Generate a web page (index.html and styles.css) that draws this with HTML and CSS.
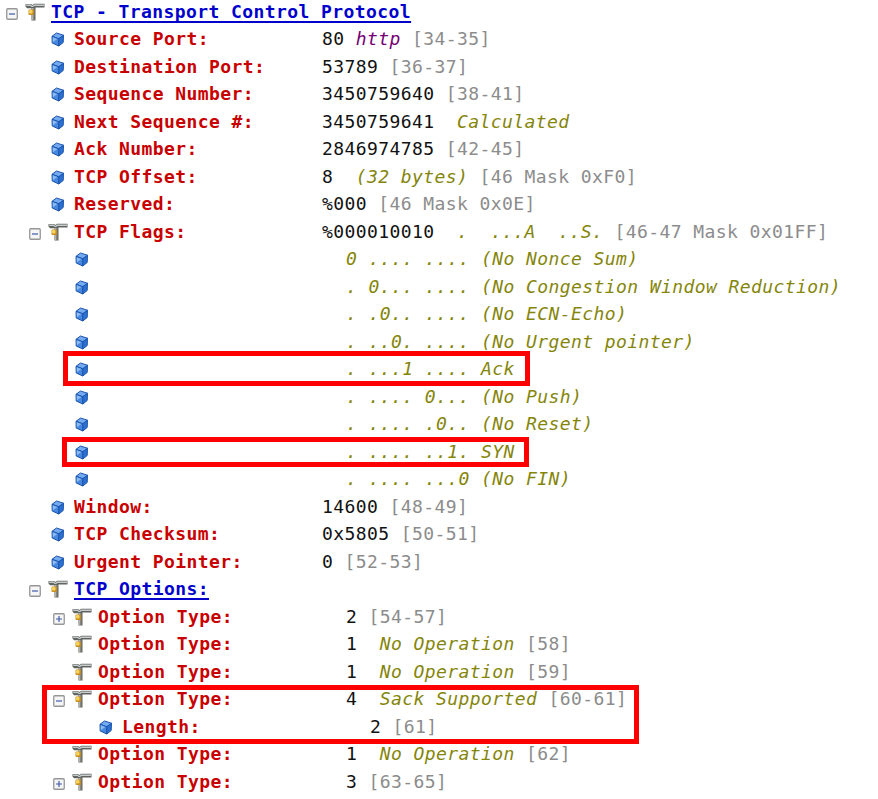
FILE: index.html
```html
<!DOCTYPE html>
<html lang="en">
<head>
<meta charset="utf-8">
<title>TCP - Transport Control Protocol</title>
<link rel="stylesheet" href="styles.css">
</head>
<body>
<svg class="defs" width="0" height="0" aria-hidden="true">
  <symbol id="tool" viewBox="0 0 20 18">
    <path d="M.5 1H6l1.500 1L9 .8h10.500v3.700H10.500V17.500H6.500V5.300H2L.5 3.500z" fill="#62655f"/>
    <path d="M1 1.400h4.800L7.300 3 9 1.400h10v1.500H9.200L8.300 4H6.500L5.500 3H1.300z" fill="#c3cbcf"/>
    <path d="M7 5h1.600v12H7z" fill="#b3b3aa"/>
    <path d="M8.600 5h1.200v12H8.600z" fill="#77776c"/>
    <rect x="3.500" y="6.500" width="5.300" height="5.500" rx="1" fill="#c98f1c"/>
    <rect x="4" y="7" width="3.500" height="3.600" rx="1" fill="#f7d25c"/>
  </symbol>
  <symbol id="cube" viewBox="0 0 14 15">
    <g stroke="#1a55ae" stroke-width="1" stroke-linejoin="round">
      <path d="M1 4.300 5.500 1l6.900 2.200-4.600 3.600z" fill="#74aaf0"/>
      <path d="M1 4.300 7.800 6.800V14L1.200 11z" fill="#4787e0"/>
      <path d="m7.800 6.800 4.700-3.500-.3 7.200L7.800 14z" fill="#2d70d0"/>
    </g>
    <path d="m1.700 5.200 4.600 1.700-4.400 3.300z" fill="#8cbcf4"/>
  </symbol>
  <symbol id="minus" viewBox="0 0 12 12">
    <rect x=".75" y=".75" width="10.500" height="10.500" rx="1" fill="#f6f6f6" stroke="#969696" stroke-width="1.300"/>
    <path d="M3 6h6" stroke="#3f5bab" stroke-width="1.200"/>
  </symbol>
  <symbol id="plus" viewBox="0 0 12 12">
    <rect x=".75" y=".75" width="10.500" height="10.500" rx="1" fill="#f6f6f6" stroke="#969696" stroke-width="1.300"/>
    <path d="M3 6h6M6 3v6" stroke="#3f5bab" stroke-width="1.200"/>
  </symbol>
</svg>
<main class="tree">
  <div class="row"><svg class="toggle"><use href="#minus"/></svg><svg class="tool"><use href="#tool"/></svg><span class="heading">TCP - Transport Control Protocol</span></div>
  <div class="row d1"><svg class="cube"><use href="#cube"/></svg><span class="label">Source Port:</span><span class="value">80 <i class="name">http</i> <s>[34-35]</s></span></div>
  <div class="row d1"><svg class="cube"><use href="#cube"/></svg><span class="label">Destination Port:</span><span class="value">53789 <s>[36-37]</s></span></div>
  <div class="row d1"><svg class="cube"><use href="#cube"/></svg><span class="label">Sequence Number:</span><span class="value">3450759640 <s>[38-41]</s></span></div>
  <div class="row d1"><svg class="cube"><use href="#cube"/></svg><span class="label">Next Sequence #:</span><span class="value">3450759641  <i>Calculated</i></span></div>
  <div class="row d1"><svg class="cube"><use href="#cube"/></svg><span class="label">Ack Number:</span><span class="value">2846974785 <s>[42-45]</s></span></div>
  <div class="row d1"><svg class="cube"><use href="#cube"/></svg><span class="label">TCP Offset:</span><span class="value">8  <i>(32 bytes)</i> <s>[46 Mask 0xF0]</s></span></div>
  <div class="row d1"><svg class="cube"><use href="#cube"/></svg><span class="label">Reserved:</span><span class="value">%000 <s>[46 Mask 0x0E]</s></span></div>
  <div class="row d1"><svg class="toggle"><use href="#minus"/></svg><svg class="tool"><use href="#tool"/></svg><span class="label">TCP Flags:</span><span class="value">%000010010  <i>.  ...A  ..S.</i> <s>[46-47 Mask 0x01FF]</s></span></div>
  <div class="row d2"><svg class="cube"><use href="#cube"/></svg><span class="label"></span><span class="value"><i>0 .... .... (No Nonce Sum)</i></span></div>
  <div class="row d2"><svg class="cube"><use href="#cube"/></svg><span class="label"></span><span class="value"><i>. 0... .... (No Congestion Window Reduction)</i></span></div>
  <div class="row d2"><svg class="cube"><use href="#cube"/></svg><span class="label"></span><span class="value"><i>. .0.. .... (No ECN-Echo)</i></span></div>
  <div class="row d2"><svg class="cube"><use href="#cube"/></svg><span class="label"></span><span class="value"><i>. ..0. .... (No Urgent pointer)</i></span></div>
  <div class="row d2"><svg class="cube"><use href="#cube"/></svg><span class="label"></span><span class="value"><i>. ...1 .... Ack</i></span></div>
  <div class="row d2"><svg class="cube"><use href="#cube"/></svg><span class="label"></span><span class="value"><i>. .... 0... (No Push)</i></span></div>
  <div class="row d2"><svg class="cube"><use href="#cube"/></svg><span class="label"></span><span class="value"><i>. .... .0.. (No Reset)</i></span></div>
  <div class="row d2"><svg class="cube"><use href="#cube"/></svg><span class="label"></span><span class="value"><i>. .... ..1. SYN</i></span></div>
  <div class="row d2"><svg class="cube"><use href="#cube"/></svg><span class="label"></span><span class="value"><i>. .... ...0 (No FIN)</i></span></div>
  <div class="row d1"><svg class="cube"><use href="#cube"/></svg><span class="label">Window:</span><span class="value">14600 <s>[48-49]</s></span></div>
  <div class="row d1"><svg class="cube"><use href="#cube"/></svg><span class="label">TCP Checksum:</span><span class="value">0x5805 <s>[50-51]</s></span></div>
  <div class="row d1"><svg class="cube"><use href="#cube"/></svg><span class="label">Urgent Pointer:</span><span class="value">0 <s>[52-53]</s></span></div>
  <div class="row d1"><svg class="toggle"><use href="#minus"/></svg><svg class="tool"><use href="#tool"/></svg><span class="heading">TCP Options:</span></div>
  <div class="row d2"><svg class="toggle"><use href="#plus"/></svg><svg class="tool"><use href="#tool"/></svg><span class="label">Option Type:</span><span class="value">2 <s>[54-57]</s></span></div>
  <div class="row d2"><svg class="tool alone"><use href="#tool"/></svg><span class="label">Option Type:</span><span class="value">1  <i>No Operation</i> <s>[58]</s></span></div>
  <div class="row d2"><svg class="tool alone"><use href="#tool"/></svg><span class="label">Option Type:</span><span class="value">1  <i>No Operation</i> <s>[59]</s></span></div>
  <div class="row d2"><svg class="toggle"><use href="#minus"/></svg><svg class="tool"><use href="#tool"/></svg><span class="label">Option Type:</span><span class="value">4  <i>Sack Supported</i> <s>[60-61]</s></span></div>
  <div class="row d3"><svg class="cube"><use href="#cube"/></svg><span class="label">Length:</span><span class="value">2 <s>[61]</s></span></div>
  <div class="row d2"><svg class="tool alone"><use href="#tool"/></svg><span class="label">Option Type:</span><span class="value">1  <i>No Operation</i> <s>[62]</s></span></div>
  <div class="row d2"><svg class="toggle"><use href="#plus"/></svg><svg class="tool"><use href="#tool"/></svg><span class="label">Option Type:</span><span class="value">3 <s>[63-65]</s></span></div>
  <div class="mark ack"></div>
  <div class="mark syn"></div>
  <div class="mark sack"></div>
</main>
</body>
</html>
```
FILE: styles.css
```css
* { box-sizing: border-box; }
html, body { margin: 0; height: 799px; overflow: hidden; background: #fff; }
.defs { position: absolute; }

.tree {
  position: relative;
  height: 799px;
  display: flex;
  flex-direction: column;
  font: 17px/27.5px "DejaVu Sans Mono", monospace;
  letter-spacing: .38px;
  color: #111;
}
.row {
  flex: none;
  display: flex;
  align-items: center;
  height: 27.5px;
  padding-left: 5.5px;
  white-space: pre;
}
.row:first-child { height: 26.300px; padding-bottom: 1.500px; }
.d1 { padding-left: 29.400px; }
.d2 { padding-left: 53.200px; }
.d3 { padding-left: 77px; }

.toggle { width: 12px; height: 12px; margin: 2px 7px 0 0; flex: none; }
.tool { width: 20px; height: 18px; margin: 0 6px 2px 0; flex: none; }
.alone { margin-left: 19px; }
.cube { width: 14px; height: 15px; margin: 0 9px 1px 22px; flex: none; }
.row:first-child .toggle { margin-top: 4px; }
.row:first-child .tool { margin-bottom: 0; }

.label, .heading, .value { transform: scaleX(1.06); transform-origin: 0 50%; }
.label { width: 247.500px; flex: none; font-weight: bold; color: #c80000; }
.heading {
  font-weight: bold;
  color: #0000cd;
  text-decoration: underline 2px;
  text-underline-offset: 3px;
  text-decoration-skip-ink: none;
}
.value i { color: #85850a; }
.value .name { color: #740074; }
.value s { color: #8c8c8c; text-decoration: none; }

/* Callouts over the rows of interest */
.mark { position: absolute; border: 5px solid #f00; }
.ack { left: 63px; top: 351px; width: 467px; height: 35px; }
.syn { left: 62px; top: 437px; width: 467px; height: 30px; }
.sack { left: 42px; top: 685px; width: 597px; height: 59px; }
```
